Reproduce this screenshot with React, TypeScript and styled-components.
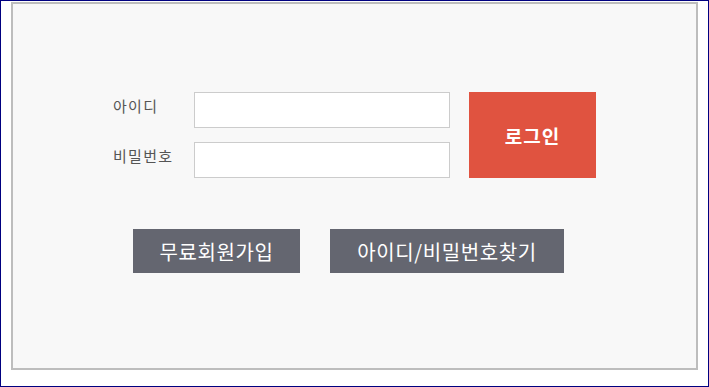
import styled, { createGlobalStyle } from "styled-components";

const GlobalStyle = createGlobalStyle`
  html, body {
    margin: 0;
    padding: 0;
    background: #ffffff;
  }
  * {
    box-sizing: border-box;
  }
`;

export default function App() {
  return (
    <>
      <GlobalStyle />
      <Frame>
        <LoginBox>
          <FormRow>
            <Fields>
              <Field>
                <Label htmlFor="userId">아이디</Label>
                <Input id="userId" type="text" />
              </Field>
              <Field>
                <Label htmlFor="userPw">비밀번호</Label>
                <Input id="userPw" type="password" />
              </Field>
            </Fields>
            <LoginButton type="button">로그인</LoginButton>
          </FormRow>
          <LinkRow>
            <SubButton type="button" $width={167}>
              무료회원가입
            </SubButton>
            <SubButton type="button" $width={234}>
              아이디/비밀번호찾기
            </SubButton>
          </LinkRow>
        </LoginBox>
      </Frame>
    </>
  );
}

const Frame = styled.div`
  width: 709px;
  height: 387px;
  border: 1px solid #000080;
  padding: 1px 10px 0 10px;
  font-family: "Noto Sans CJK KR", "Noto Sans", sans-serif;
`;

const LoginBox = styled.div`
  width: 687px;
  height: 368px;
  border: 2px solid #bdbdbd;
  background: #f8f8f8;
  padding: 88px 0 0 0;
`;

const FormRow = styled.div`
  display: flex;
  align-items: flex-start;
  padding-left: 100px;
`;

const Fields = styled.div`
  display: flex;
  flex-direction: column;
  gap: 14px;
`;

const Field = styled.div`
  display: flex;
  align-items: center;
`;

const Label = styled.label`
  width: 81px;
  height: 36px;
  padding-bottom: 9px;
  display: flex;
  align-items: center;
  font-size: 15px;
  letter-spacing: 1.3px;
  color: #555555;
`;

const Input = styled.input`
  width: 256px;
  height: 36px;
  border: 1px solid #cccccc;
  background: #ffffff;
  outline: none;
  padding: 0 8px;
`;

const LoginButton = styled.button`
  width: 127px;
  height: 86px;
  margin-left: 19px;
  border: none;
  background: #e05340;
  color: #ffffff;
  font-family: inherit;
  font-size: 19px;
  font-weight: 700;
  letter-spacing: 1px;
  cursor: pointer;
  padding: 0;
`;

const LinkRow = styled.div`
  display: flex;
  gap: 30px;
  margin-top: 51px;
  padding-left: 120px;
`;

const SubButton = styled.button<{ $width: number }>`
  width: ${(p) => p.$width}px;
  height: 44px;
  border: none;
  background: #646670;
  color: #ffffff;
  font-family: inherit;
  font-size: 20px;
  letter-spacing: 0.6px;
  cursor: pointer;
  padding: 0;
`;
